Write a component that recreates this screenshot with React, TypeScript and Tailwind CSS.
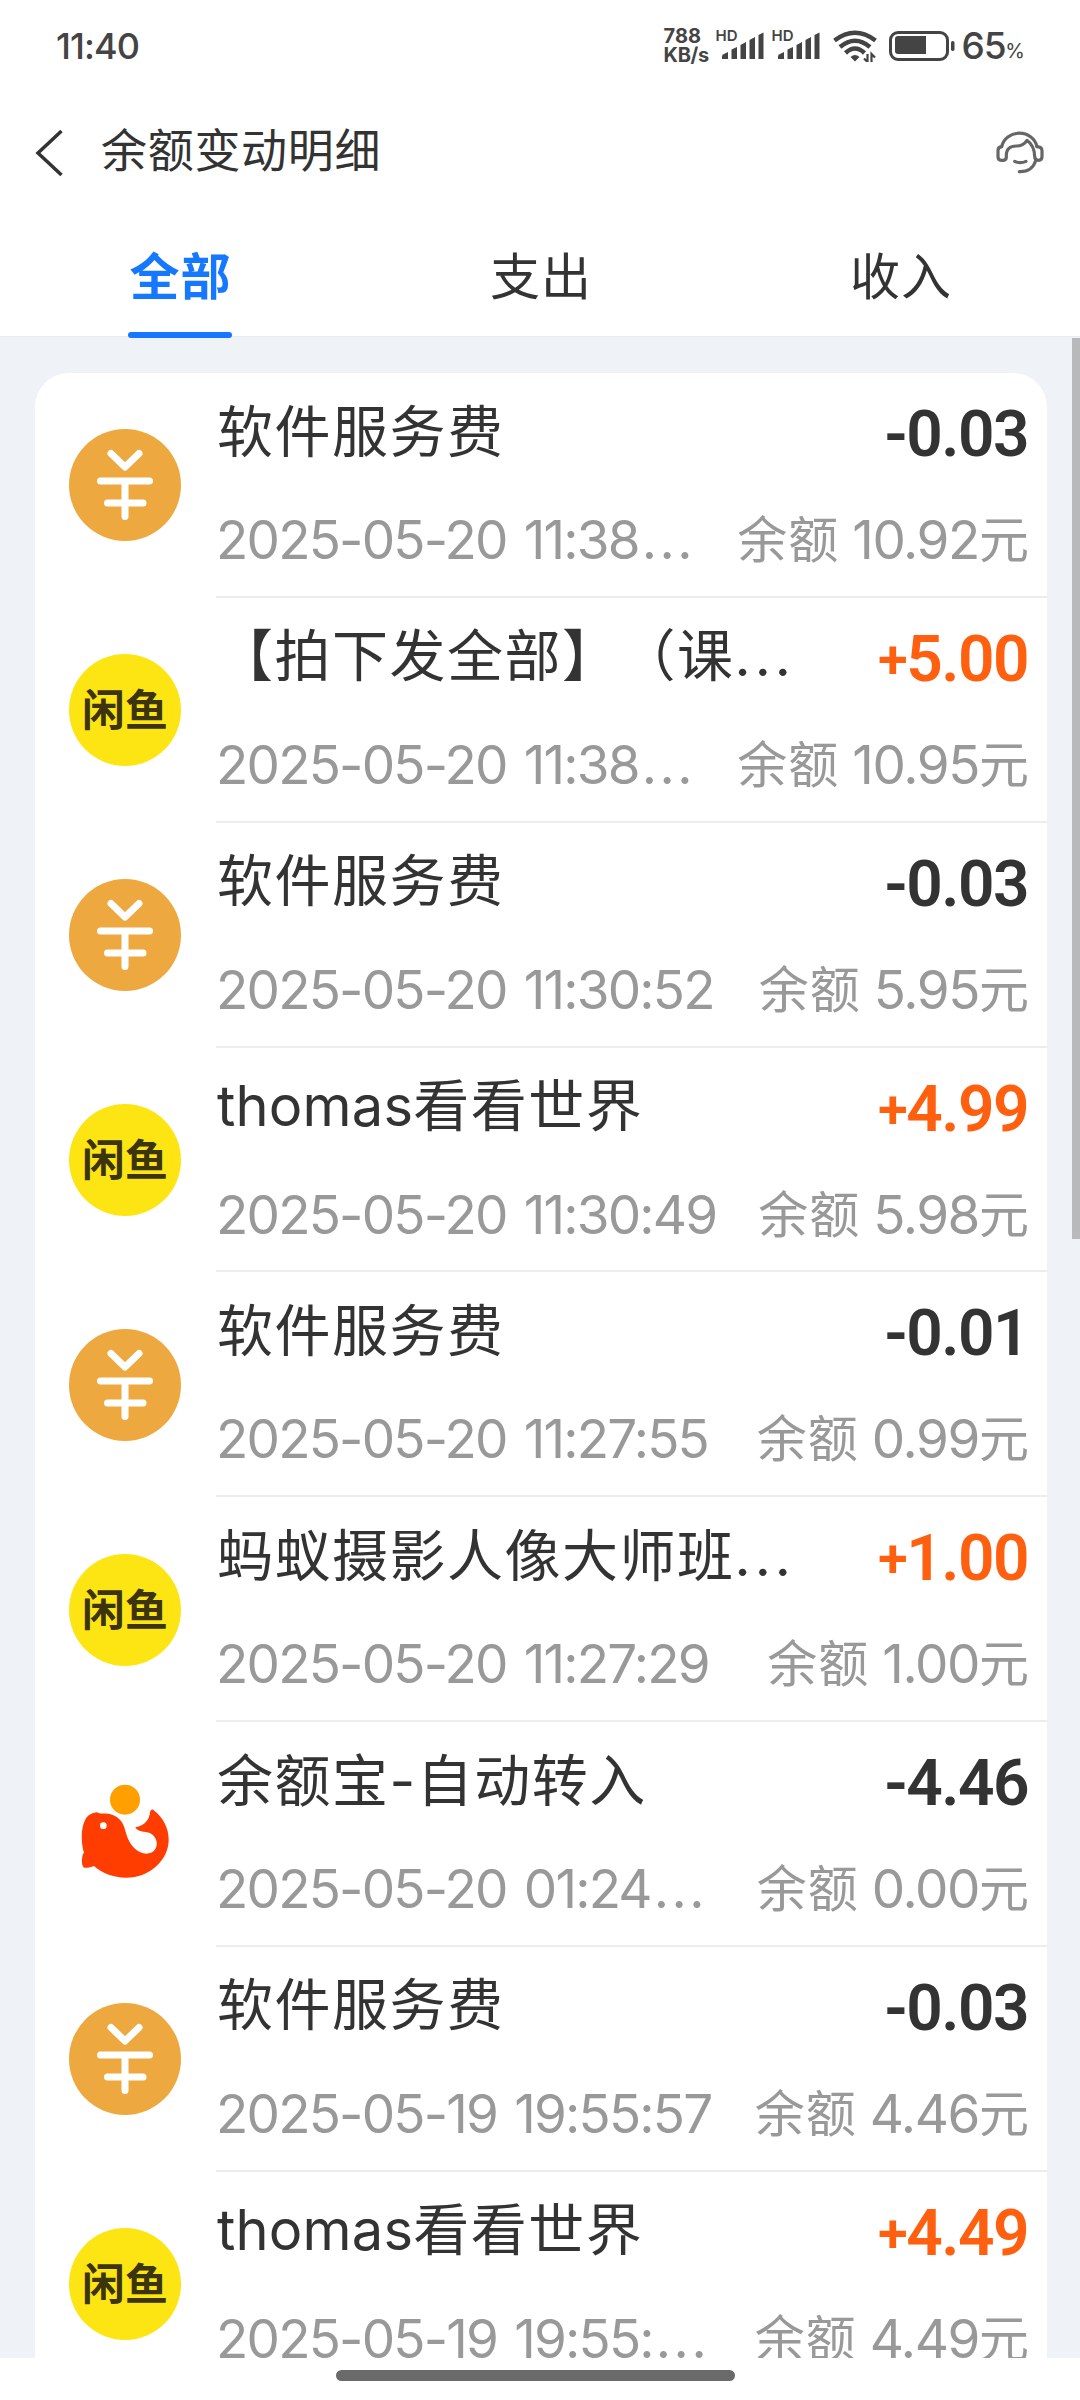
import React from 'react';

type IconKind = 'fee' | 'xianyu' | 'yuebao';

interface Transaction {
  icon: IconKind;
  latin?: string;
  title: string;
  titleCut?: boolean;
  time: string;
  timeCut?: boolean;
  amount: string;
  balance: string;
}

const transactions: Transaction[] = [
  { icon: 'fee', title: '软件服务费', time: '2025-05-20 11:38', timeCut: true, amount: '-0.03', balance: '10.92' },
  { icon: 'xianyu', title: '【拍下发全部】（课', titleCut: true, time: '2025-05-20 11:38', timeCut: true, amount: '+5.00', balance: '10.95' },
  { icon: 'fee', title: '软件服务费', time: '2025-05-20 11:30:52', amount: '-0.03', balance: '5.95' },
  { icon: 'xianyu', latin: 'thomas', title: '看看世界', time: '2025-05-20 11:30:49', amount: '+4.99', balance: '5.98' },
  { icon: 'fee', title: '软件服务费', time: '2025-05-20 11:27:55', amount: '-0.01', balance: '0.99' },
  { icon: 'xianyu', title: '蚂蚁摄影人像大师班', titleCut: true, time: '2025-05-20 11:27:29', amount: '+1.00', balance: '1.00' },
  { icon: 'yuebao', title: '余额宝-自动转入', time: '2025-05-20 01:24', timeCut: true, amount: '-4.46', balance: '0.00' },
  { icon: 'fee', title: '软件服务费', time: '2025-05-19 19:55:57', amount: '-0.03', balance: '4.46' },
  { icon: 'xianyu', latin: 'thomas', title: '看看世界', time: '2025-05-19 19:55:', timeCut: true, amount: '+4.49', balance: '4.49' },
];

const SignalIcon = () => (
  <svg className="h-[32px] w-[48px] shrink-0" viewBox="0 0 48 32" fill="#444">
    <path d="M5 29V26.5Q5 25 6.5 24.2L11 22V29Z" />
    <path d="M14.500 29V19.500L20 17V29Z" />
    <path d="M23.500 29V15L29 12V29Z" />
    <path d="M32.500 29V10L38 7V29Z" />
    <path d="M41.500 29V5L46.500 2.500V29Z" />
  </svg>
);

const SignalGroup = () => (
  <div className="relative w-[56px]">
    <span className="absolute left-[-1px] top-[-2px] text-[15px] leading-[16px] font-semibold">HD</span>
    <SignalIcon />
  </div>
);

const WifiIcon = () => (
  <svg className="ml-[4px] h-[32px] w-[44px]" viewBox="0 0 44 32" fill="none" stroke="#444" strokeWidth="4.500">
    <path d="M1.500 10.500Q22 -5 42.500 10.500" />
    <path d="M7 17Q22 4.500 37 17" />
    <path d="M12.500 23Q22 14 31.500 23" />
    <path d="M17.500 27Q22 23 26.500 27L22 31.500Z" fill="#444" stroke="none" />
    <path d="M34.500 24V32L31 28.500M38.500 32V24L42 27.500" strokeWidth="2.200" />
  </svg>
);

const StatusBar = () => (
  <div className="flex h-[92px] items-center justify-between pl-[56px] pr-[56px] text-[#444]">
    <span className="text-[36px] font-medium tracking-[-0.9px]">11:40</span>
    <div className="flex items-center">
      <div className="mr-[4px] w-[49px] text-[20px] leading-[19px] font-bold">
        <div>788</div>
        <div className="tracking-[-0.3px]">KB/s</div>
      </div>
      <SignalGroup />
      <SignalGroup />
      <WifiIcon />
      <svg className="ml-[12px] h-[30px] w-[68px]" viewBox="0 0 68 30">
        <rect x="1.500" y="1.500" width="57" height="27" rx="7.500" fill="none" stroke="#444" strokeWidth="3" />
        <path d="M9 5H37V23H9Q6 23 6 20V8Q6 5 9 5Z" fill="#444" />
        <rect x="62" y="10" width="3.500" height="10" rx="1.700" fill="#444" />
      </svg>
      <span className="ml-[5px] text-[37px] font-medium tracking-[-1.2px]">65</span>
      <span className="mt-[9px] text-[20px] tracking-[-1px]">%</span>
    </div>
  </div>
);

const Header = () => (
  <div className="flex h-[122px] items-center justify-between pl-[34px] pr-[35px]">
    <div className="flex items-center">
      <svg className="h-[48px] w-[32px]" viewBox="0 0 32 48" fill="none" stroke="#333" strokeWidth="3.500">
        <path d="M27.500 2L4 24L27.500 46" />
      </svg>
      <h1 className="ml-[35px] pb-[6px] text-[46px] leading-[60px] tracking-[0.7px]">余额变动明细</h1>
    </div>
    <svg className="h-[48px] w-[52px]" viewBox="0 0 156 144" fill="none" stroke="#666" strokeWidth="9.500" strokeLinecap="round" strokeLinejoin="round">
      <path d="M26 53A54 50 0 0 1 132 53" />
      <path d="M26 53Q15 54 15 65V83Q15 93 25 94H31Q40 93 40 84V78Q41 51 70 51Q91 51 102 34Q124 50 125 82Q125 94 136 94Q147 93 147 83V65Q147 54 132 53" />
      <path d="M128 95Q118 129 79 128" />
      <path d="M65 97Q82 105 99 97" />
    </svg>
  </div>
);

const Tabs = () => (
  <div className="grid h-[123px] grid-cols-3 border-b border-[#e9edf1] text-center text-[50px] leading-[126px] tracking-[1px]">
    <div className="relative font-bold text-[#1677ff]">
      <span className="ml-[1px]">全部</span>
      <span className="absolute bottom-[2px] left-[128px] z-10 h-[6px] w-[104px] rounded-full bg-[#1677ff]" />
    </div>
    <div className="pl-[2px]">支出</div>
    <div className="pl-[2px]">收入</div>
  </div>
);

const TransactionIcon: React.FC<{ kind: IconKind }> = ({ kind }) => {
  if (kind === 'fee') {
    return (
      <svg className="h-[112px] w-[112px]" viewBox="0 0 112 112" fill="none" stroke="#fff" strokeWidth="7" strokeLinecap="round" strokeLinejoin="round">
        <circle cx="56" cy="56" r="56" fill="#eda93f" stroke="none" />
        <path d="M42 24.500L56 38L70 24.500M31.500 52H80.500M38.500 74H74M56 52V87.500" />
      </svg>
    );
  }
  if (kind === 'xianyu') {
    return (
      <div className="flex h-[112px] w-[112px] items-center justify-center rounded-full bg-[#fde514]">
        <span className="text-[43px] leading-[60px] font-bold text-[#3b340c]">闲鱼</span>
      </div>
    );
  }
  return (
    <svg className="h-[112px] w-[112px]" viewBox="57 85 336 336">
      <circle cx="225" cy="150" r="45" fill="#ffa000" />
      <path
        fill="#ff3d00"
        d="M140 188C150 194 165 190 180 193C215 202 222 228 228 250C237 285 262 312 290 312C310 312 322 297 320 278C318 258 300 246 280 246C270 245 258 240 256 233C285 228 298 210 300 188C302 178 308 178 313 183C340 205 356 235 356 270C356 330 300 384 228 384C190 384 155 370 132 349C122 352 112 356 103 354C95 350 95 335 97 320C98 312 103 310 102 308C92 280 88 200 130 190Z"
      />
      <circle cx="160" cy="228" r="10" fill="#fff" />
    </svg>
  );
};

const TransactionRow: React.FC<{ item: Transaction }> = ({ item }) => (
  <li className="flex h-[224.85px] items-center pl-[34px]">
    <TransactionIcon kind={item.icon} />
    <div className="ml-[35px] h-full min-w-0 flex-1 border-b-2 border-[#ededed] pr-[17px]">
      <div className="flex h-[114px] items-center justify-between whitespace-nowrap">
        <span className="pl-[1px] pt-[3px] text-[56px] leading-[80px] tracking-[1.500px] [text-spacing-trim:space-all]">
          {item.latin && <span className="tracking-[0.2px]">{item.latin}</span>}
          {item.title}
          {item.titleCut && <span className="tracking-[4px]">...</span>}
        </span>
        <span
          className={`mr-[2px] flex items-center pt-[10px] font-[Roboto,sans-serif] text-[64px] leading-[80px] font-semibold tracking-[-1.500px] ${item.amount.startsWith('+') ? 'text-[#ff6010]' : 'text-[#333]'}`}
        >
          <span className={item.amount.startsWith('+') ? 'ml-[-2px] text-[54px]' : ''}>{item.amount[0]}</span>
          <span>{item.amount.slice(1)}</span>
        </span>
      </div>
      <div className="flex h-[106px] items-center justify-between whitespace-nowrap text-[#999]">
        <span className="text-[53px] leading-[70px] tracking-[-1.800px] [word-spacing:4px]">
          {item.time}
          {item.timeCut && <span className="ml-[3px] tracking-[2.500px]">...</span>}
        </span>
        <span className="mr-[1px] flex text-[50px] leading-[70px]">
          <span className="tracking-[1px]">余额</span>
          <span className="ml-[13px] text-[53px] tracking-[-1.400px]">{item.balance}</span>
          <span>元</span>
        </span>
      </div>
    </div>
  </li>
);

const App: React.FC = () => (
  <div className="flex h-[2400px] w-[1080px] flex-col overflow-hidden bg-white font-[Inter,'Noto_Sans_CJK_SC',sans-serif] text-[#333]">
    <StatusBar />
    <Header />
    <Tabs />
    <main className="relative h-[2021px] shrink-0 overflow-hidden bg-[#eff3f8] pt-[36px]">
      <ul className="ml-[35px] w-[1012px] rounded-t-[34px] bg-white">
        {transactions.map((item, i) => (
          <TransactionRow key={i} item={item} />
        ))}
      </ul>
      <div className="absolute right-0 top-[1px] h-[901px] w-[8px] bg-[#b7b9bb]" />
    </main>
    <div className="flex flex-1 justify-center pt-[12px] pr-[9px]">
      <div className="h-[11px] w-[399px] rounded-full bg-[#6a6a6a]" />
    </div>
  </div>
);

export default App;
